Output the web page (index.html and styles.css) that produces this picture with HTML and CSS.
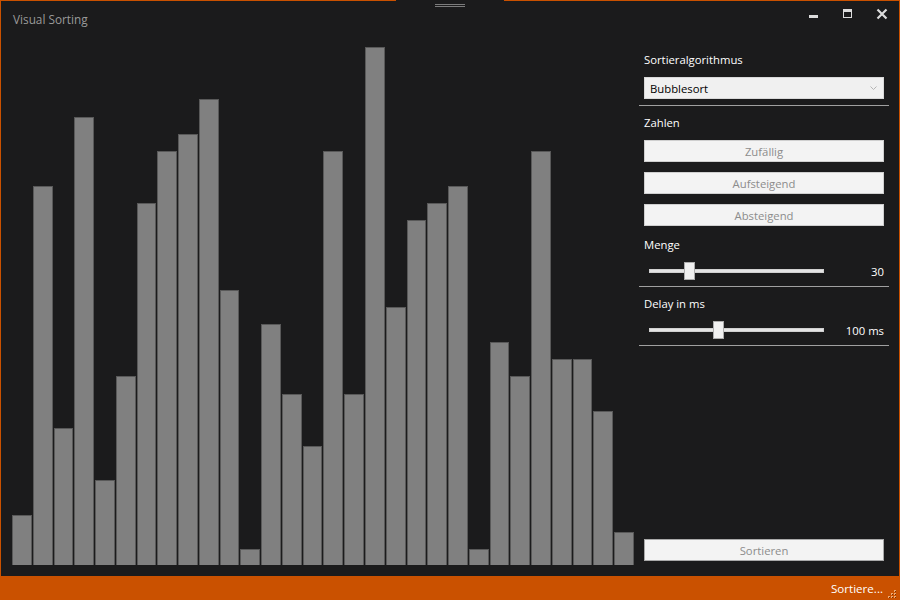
FILE: index.html
```html
<!DOCTYPE html>
<html lang="de">
<head>
<meta charset="utf-8">
<title>Visual Sorting</title>
<link rel="stylesheet" href="styles.css">
</head>
<body>
<div class="window">
  <div class="grip"><span></span><span></span></div>
  <header class="titlebar">
    <div class="title">Visual Sorting</div>
    <div class="controls">
      <div class="wbtn"><svg width="34" height="28" viewBox="0 0 34 28"><rect x="12" y="14" width="9" height="3" fill="#dcdcdc"/></svg></div>
      <div class="wbtn"><svg width="34" height="28" viewBox="0 0 34 28"><rect x="12.5" y="8.5" width="8" height="8" fill="none" stroke="#dcdcdc" stroke-width="1"/><rect x="12" y="8" width="9" height="3" fill="#dcdcdc"/></svg></div>
      <div class="wbtn"><svg width="34" height="28" viewBox="0 0 34 28"><path d="M12.5 8.5 L21.5 17.5 M21.5 8.5 L12.5 17.5" stroke="#dcdcdc" stroke-width="2.2" fill="none"/></svg></div>
    </div>
  </header>
  <main class="main">
    <div class="chart">
      <div class="bar" style="height:50px"></div>
      <div class="bar" style="height:379px"></div>
      <div class="bar" style="height:137px"></div>
      <div class="bar" style="height:448px"></div>
      <div class="bar" style="height:85px"></div>
      <div class="bar" style="height:189px"></div>
      <div class="bar" style="height:362px"></div>
      <div class="bar" style="height:414px"></div>
      <div class="bar" style="height:431px"></div>
      <div class="bar" style="height:466px"></div>
      <div class="bar" style="height:275px"></div>
      <div class="bar" style="height:16px"></div>
      <div class="bar" style="height:241px"></div>
      <div class="bar" style="height:171px"></div>
      <div class="bar" style="height:119px"></div>
      <div class="bar" style="height:414px"></div>
      <div class="bar" style="height:171px"></div>
      <div class="bar" style="height:518px"></div>
      <div class="bar" style="height:258px"></div>
      <div class="bar" style="height:345px"></div>
      <div class="bar" style="height:362px"></div>
      <div class="bar" style="height:379px"></div>
      <div class="bar" style="height:16px"></div>
      <div class="bar" style="height:223px"></div>
      <div class="bar" style="height:189px"></div>
      <div class="bar" style="height:414px"></div>
      <div class="bar" style="height:206px"></div>
      <div class="bar" style="height:206px"></div>
      <div class="bar" style="height:154px"></div>
      <div class="bar" style="height:33px"></div>
    </div>
    <aside class="panel">
      <div class="label first">Sortieralgorithmus</div>
      <div class="select">
        <span>Bubblesort</span>
        <svg width="7" height="4" viewBox="0 0 7 4"><path d="M0.5 0.5 L3.5 3.5 L6.5 0.5" fill="none" stroke="#b4b4b4" stroke-width="1"/></svg>
      </div>
      <div class="sep"></div>
      <div class="label">Zahlen</div>
      <div class="btn first-btn">Zufällig</div>
      <div class="btn">Aufsteigend</div>
      <div class="btn">Absteigend</div>
      <div class="label menge">Menge</div>
      <div class="slider-row">
        <div class="slider"><div class="track"><div class="thumb" style="left:34px"></div></div></div>
        <div class="value">30</div>
      </div>
      <div class="sep after-slider"></div>
      <div class="label">Delay in ms</div>
      <div class="slider-row">
        <div class="slider"><div class="track"><div class="thumb" style="left:63px"></div></div></div>
        <div class="value">100 ms</div>
      </div>
      <div class="sep after-slider"></div>
      <div class="spacer"></div>
      <div class="btn sort">Sortieren</div>
    </aside>
  </main>
  <footer class="status">
    <span class="status-text">Sortiere...</span>
    <svg class="sizegrip" width="11" height="11" viewBox="0 0 11 11">
      <rect x="8" y="2" width="2" height="2" fill="#f0a870"/>
      <rect x="5" y="5" width="2" height="2" fill="#f0a870"/>
      <rect x="8" y="5" width="2" height="2" fill="#f0a870"/>
      <rect x="2" y="8" width="2" height="2" fill="#f0a870"/>
      <rect x="5" y="8" width="2" height="2" fill="#f0a870"/>
      <rect x="8" y="8" width="2" height="2" fill="#f0a870"/>
      <rect x="9" y="3" width="1" height="1" fill="#7a3000"/>
      <rect x="6" y="6" width="1" height="1" fill="#7a3000"/>
      <rect x="9" y="6" width="1" height="1" fill="#7a3000"/>
      <rect x="3" y="9" width="1" height="1" fill="#7a3000"/>
      <rect x="6" y="9" width="1" height="1" fill="#7a3000"/>
      <rect x="9" y="9" width="1" height="1" fill="#7a3000"/>
    </svg>
  </footer>
</div>
</body>
</html>
```

FILE: styles.css
```css
* { box-sizing: border-box; }
html, body { margin: 0; padding: 0; }
body {
  width: 900px;
  height: 600px;
  overflow: hidden;
  background: #1b1b1c;
  font-family: "Open Sans", "Noto Sans", sans-serif;
  font-size: 11.3px;
}
.window {
  position: relative;
  width: 900px;
  height: 600px;
  border: 1px solid #ca5100;
  border-bottom: 0;
  background: #1b1b1c;
  display: flex;
  flex-direction: column;
}
.grip {
  position: absolute;
  left: 395px;
  top: -1px;
  width: 108px;
  height: 8px;
  background: #1b1b1c;
  display: flex;
  flex-direction: column;
  align-items: center;
  padding-top: 4px;
  gap: 1px;
}
.grip span {
  display: block;
  width: 30px;
  height: 1px;
  background: #7c7c7c;
}
.titlebar {
  height: 36px;
  display: flex;
  justify-content: space-between;
  align-items: flex-start;
}
.title {
  color: #9a9a9a;
  font-size: 11.8px;
  line-height: 16px;
  padding: 10px 0 0 12px;
}
.controls {
  display: flex;
}
.wbtn {
  width: 34px;
  height: 28px;
}
.wbtn svg { display: block; }
.main {
  flex: 1;
  display: flex;
  padding: 0 10px 11px 11px;
  min-height: 0;
}
.chart {
  flex: 1;
  display: flex;
  align-items: flex-end;
  gap: 1px;
}
.bar {
  flex: 1;
  background: #808080;
  border: 1px solid #595959;
  border-bottom: 0;
}
.panel {
  width: 250px;
  margin-left: 5px;
  display: flex;
  flex-direction: column;
}
.label {
  color: #ffffff;
  line-height: 16px;
  height: 16px;
  margin: 9px 5px 0;
  white-space: nowrap;
}
.label.first { margin-top: 15px; }
.label.menge { margin-top: 11px; }
.select {
  height: 22px;
  margin: 9px 5px 0;
  background: #f0f0f0;
  border: 1px solid #d9d9d9;
  display: flex;
  align-items: center;
  justify-content: space-between;
  padding: 0 6px 0 5px;
  color: #000;
}
.select svg { display: block; }
.sep {
  height: 1px;
  background: #a0a0a0;
  margin-top: 6px;
}
.sep.after-slider { margin-top: 5px; }
.btn {
  height: 22px;
  margin: 10px 5px 0;
  background: #f3f3f3;
  border: 1px solid #cfcfcf;
  color: #8c8c8c;
  display: flex;
  align-items: center;
  justify-content: center;
}
.btn.first-btn { margin-top: 9px; }
.slider-row {
  height: 20px;
  margin: 8px 5px 0;
  display: flex;
  align-items: center;
}
.slider {
  width: 185px;
  padding: 0 5px;
}
.track {
  position: relative;
  height: 4px;
  background: #e4e4e4;
  border: 1px solid #d0d0d0;
}
.thumb {
  position: absolute;
  top: -8px;
  width: 11px;
  height: 18px;
  background: #f0f0f0;
  border: 1px solid #acacac;
}
.value {
  flex: 1;
  text-align: right;
  color: #ffffff;
}
.spacer { flex: 1; }
.btn.sort {
  margin-bottom: 4px;
  border-color: #a9a9a9;
}
.status {
  height: 24px;
  margin: 0 -1px;
  background: #ca5100;
  display: flex;
  align-items: center;
  justify-content: flex-end;
  padding-right: 3px;
  color: #ffffff;
}
.status-text {
  font-size: 11.6px;
  margin-right: 3px;
}
.sizegrip {
  display: block;
  align-self: flex-end;
  margin-bottom: 1px;
}
```
